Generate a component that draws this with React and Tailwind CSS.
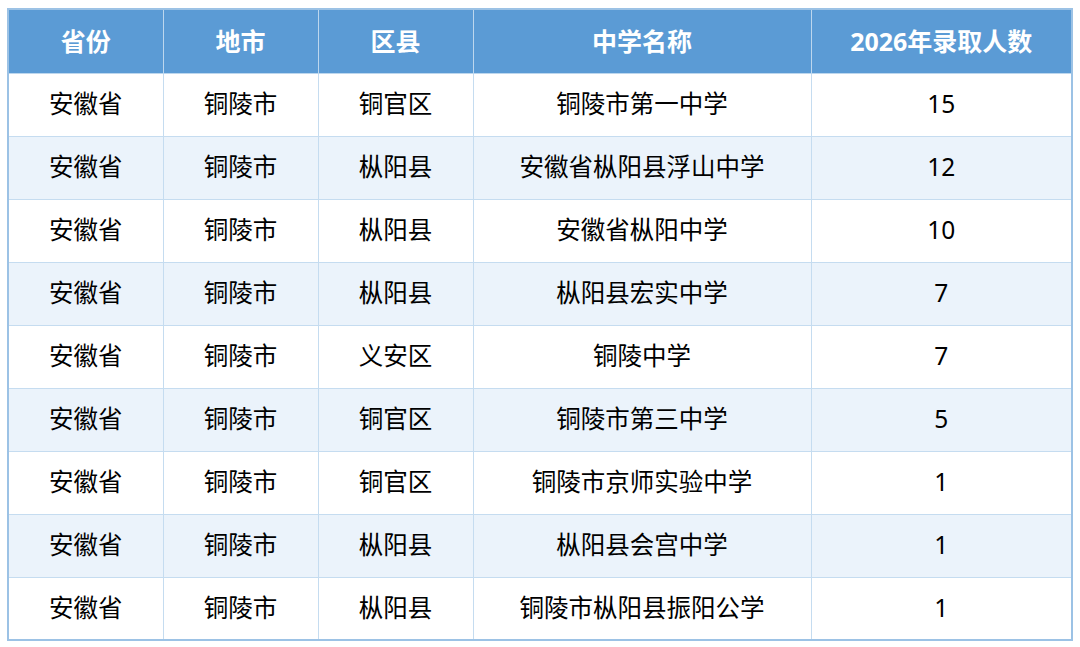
const rows = [
  ['安徽省', '铜陵市', '铜官区', '铜陵市第一中学', '15'],
  ['安徽省', '铜陵市', '枞阳县', '安徽省枞阳县浮山中学', '12'],
  ['安徽省', '铜陵市', '枞阳县', '安徽省枞阳中学', '10'],
  ['安徽省', '铜陵市', '枞阳县', '枞阳县宏实中学', '7'],
  ['安徽省', '铜陵市', '义安区', '铜陵中学', '7'],
  ['安徽省', '铜陵市', '铜官区', '铜陵市第三中学', '5'],
  ['安徽省', '铜陵市', '铜官区', '铜陵市京师实验中学', '1'],
  ['安徽省', '铜陵市', '枞阳县', '枞阳县会宫中学', '1'],
  ['安徽省', '铜陵市', '枞阳县', '铜陵市枞阳县振阳公学', '1'],
];

const headers = ['省份', '地市', '区县', '中学名称', '2026年录取人数'];
const widths = ['w-[155px]', 'w-[155px]', 'w-[155px]', 'w-[338px]', 'w-[261px]'];

export default function App() {
  return (
    <div className="w-[1080px] h-[647px] bg-white pt-[8px] pl-[7px]" style={{ fontFamily: '"Noto Sans", "Noto Sans CJK SC", sans-serif' }}>
      <table className="table-fixed border-collapse w-[1065px] border-2 border-[#9cc2e5]">
        <thead>
          <tr className="bg-[#5b9bd5] h-[64px]">
            {headers.map((h, i) => (
              <th key={i} className={`${widths[i]} text-white font-bold text-[25px] text-center border border-[#bdd7ee] p-0`}>
                {h}
              </th>
            ))}
          </tr>
        </thead>
        <tbody>
          {rows.map((r, ri) => (
            <tr key={ri} className={ri % 2 === 0 ? 'bg-white h-[63px]' : 'bg-[#ebf3fb] h-[63px]'}>
              {r.map((c, ci) => (
                <td key={ci} className="text-center text-[24.5px] text-black border border-[#c5dcf0] p-0">
                  {c}
                </td>
              ))}
            </tr>
          ))}
        </tbody>
      </table>
    </div>
  );
}
